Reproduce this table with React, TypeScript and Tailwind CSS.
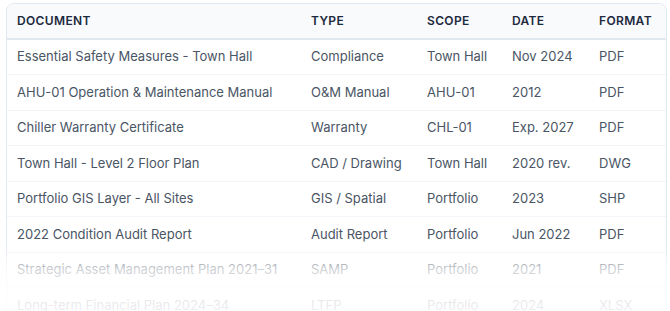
const ROWS = [
  { doc: 'Essential Safety Measures - Town Hall', type: 'Compliance', scope: 'Town Hall', date: 'Nov 2024', format: 'PDF' },
  { doc: 'AHU-01 Operation & Maintenance Manual', type: 'O&M Manual', scope: 'AHU-01', date: '2012', format: 'PDF' },
  { doc: 'Chiller Warranty Certificate', type: 'Warranty', scope: 'CHL-01', date: 'Exp. 2027', format: 'PDF' },
  { doc: 'Town Hall - Level 2 Floor Plan', type: 'CAD / Drawing', scope: 'Town Hall', date: '2020 rev.', format: 'DWG' },
  { doc: 'Portfolio GIS Layer - All Sites', type: 'GIS / Spatial', scope: 'Portfolio', date: '2023', format: 'SHP' },
  { doc: '2022 Condition Audit Report', type: 'Audit Report', scope: 'Portfolio', date: 'Jun 2022', format: 'PDF' },
  { doc: 'Strategic Asset Management Plan 2021–31', type: 'SAMP', scope: 'Portfolio', date: '2021', format: 'PDF' },
  { doc: 'Long-term Financial Plan 2024–34', type: 'LTFP', scope: 'Portfolio', date: '2024', format: 'XLSX' },
];

const HEADERS = ['Document', 'Type', 'Scope', 'Date', 'Format'];

export default function App() {
  return (
    <div className="relative h-[311px] overflow-hidden bg-white font-['Inter',sans-serif]">
      <div className="ml-[6px] mt-[3px] w-[661px] overflow-hidden rounded-lg border border-slate-200 bg-white">
        <table className="w-full table-fixed border-collapse text-left">
          <colgroup>
            <col className="w-[294px]" />
            <col className="w-[116px]" />
            <col className="w-[85px]" />
            <col className="w-[87px]" />
            <col />
          </colgroup>
          <thead className="bg-slate-50">
            <tr className="h-[35px] border-b-2 border-slate-200">
              {HEADERS.map((h) => (
                <th key={h} className="px-2.5 text-[12px] font-semibold uppercase tracking-[0.03em] text-slate-800">
                  {h}
                </th>
              ))}
            </tr>
          </thead>
          <tbody>
            {ROWS.map((r) => (
              <tr key={r.doc} className="h-[35.5px] border-b border-slate-100 text-[13px] text-gray-600">
                <td className="px-2.5">{r.doc}</td>
                <td className="px-2.5">{r.type}</td>
                <td className="px-2.5">{r.scope}</td>
                <td className="px-2.5">{r.date}</td>
                <td className="px-2.5">{r.format}</td>
              </tr>
            ))}
          </tbody>
        </table>
      </div>
      {/* fade-out over the last rows */}
      <div className="pointer-events-none absolute inset-x-0 bottom-0 h-[68px] bg-[linear-gradient(to_bottom,rgba(255,255,255,0)_0%,rgba(255,255,255,0.75)_40%,rgba(255,255,255,0.9)_100%)]" />
    </div>
  );
}
